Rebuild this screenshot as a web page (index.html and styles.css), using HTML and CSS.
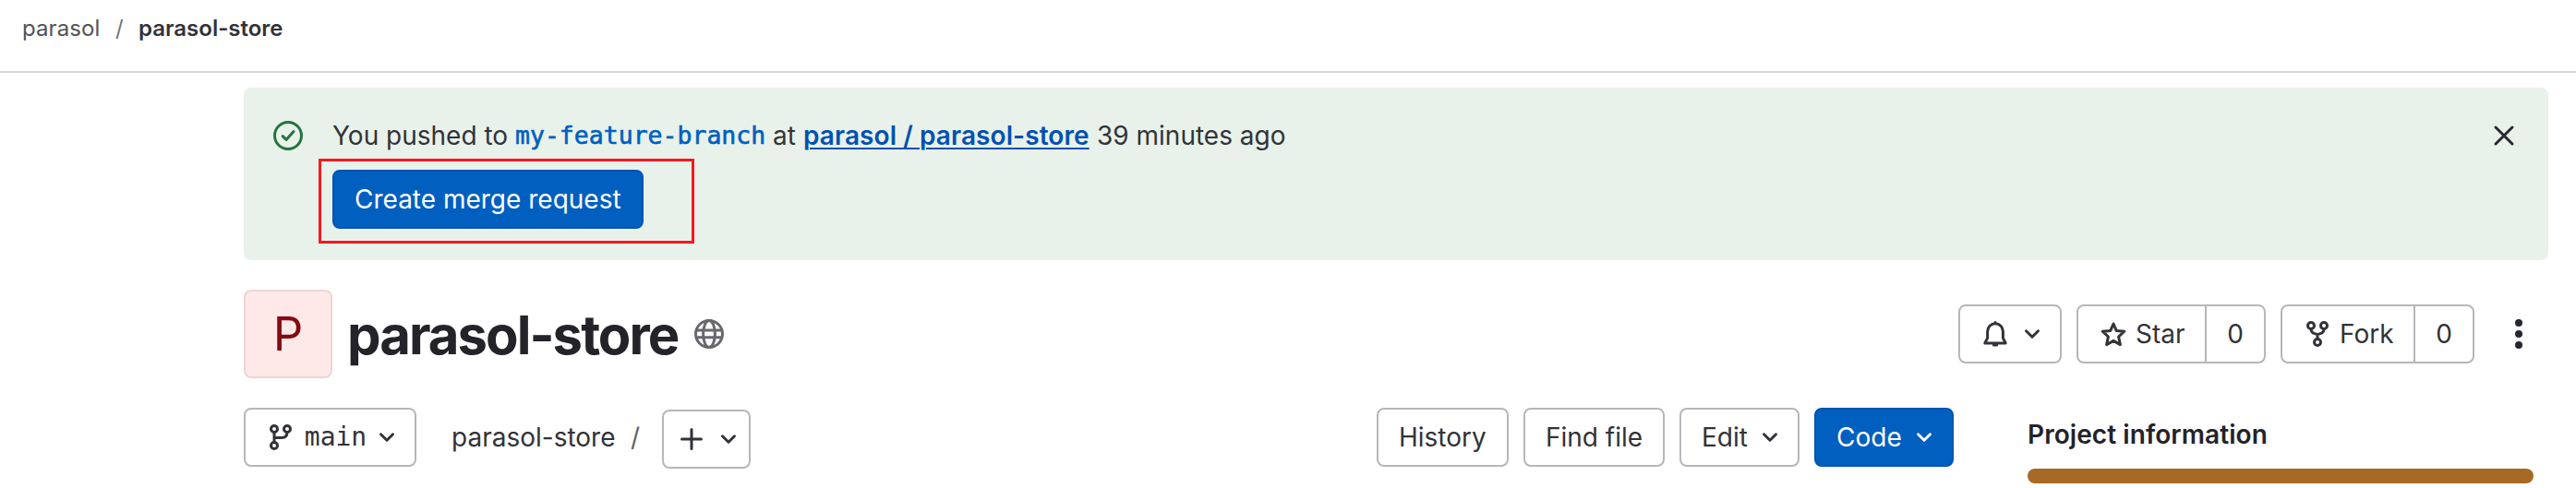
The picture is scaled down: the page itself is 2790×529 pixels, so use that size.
FILE: index.html
```html
<!DOCTYPE html>
<html lang="en">
<head>
<meta charset="utf-8">
<title>parasol-store</title>
<link rel="stylesheet" href="styles.css">
</head>
<body>
<svg class="defs" aria-hidden="true">
  <symbol id="chevron" viewBox="0 0 16 16"><path d="M4.75 6.4 8 9.6l3.250-3.200"/></symbol>
</svg>
<header class="topbar">
  <span class="crumb">parasol</span><span class="crumb-sep">/</span><b class="crumb-current">parasol-store</b>
</header>
<main class="page">
  <section class="alert">
    <svg class="icon alert-icon" viewBox="0 0 16 16"><circle cx="8" cy="8" r="7.25"/><path d="M5.1 8.3 7 10.2l4-4.4"/></svg>
    <div class="alert-body">
      <p class="alert-text"><span class="pushed">You pushed to</span><a class="branch">my-feature-branch</a><span class="at">at</span><a class="project-link">parasol / parasol-store</a><span class="ago">39 minutes ago</span></p>
      <div class="highlight"><button class="btn primary create"><span>Create merge request</span></button></div>
    </div>
    <svg class="icon close" viewBox="0 0 16 16"><path d="m3.5 3.5 9 9m0-9-9 9"/></svg>
  </section>
  <section class="title-row">
    <div class="avatar">P</div>
    <h1>parasol-store</h1>
    <svg class="icon globe" viewBox="0 0 16 16"><circle cx="8" cy="8" r="7.25"/><ellipse cx="8" cy="8" rx="3.2" ry="7.25"/><path d="M1.3 6h13.4M1.3 9.9h13.4"/></svg>
    <div class="actions">
      <button class="btn bell"><svg class="icon" viewBox="0 0 16 16"><path d="M8 1.7v.5M3.8 6.600a4.200 4.200 0 0 1 8.400 0v3.600l1.400 2.800H2.400l1.400-2.800zM7.200 14h1.600"/></svg><svg class="icon"><use href="#chevron"/></svg></button>
      <div class="group star"><button class="btn"><svg class="icon" viewBox="0 0 16 16"><path d="m8 2.500 1.600 3.700 4.300.400-3.100 2.900.900 4.300L8 11.700l-3.700 2.100.900-4.300-3.100-2.900 4.300-.400z"/></svg><span>Star</span></button><button class="btn count">0</button></div>
      <div class="group fork"><button class="btn"><svg class="icon" viewBox="0 0 16 16"><circle cx="4.5" cy="3.5" r="1.75"/><circle cx="11.5" cy="3.5" r="1.75"/><circle cx="8" cy="12.5" r="1.75"/><path d="M4.500 5.250C4.500 7 5.200 7.500 6.500 7.800L8 8.300l1.500-.500c1.300-.300 2-.800 2-2.550M8 8.300v2.450"/></svg><span>Fork</span></button><button class="btn count">0</button></div>
      <svg class="dots" viewBox="0 0 16 16"><circle cx="8" cy="2" r="2"/><circle cx="8" cy="8" r="2"/><circle cx="8" cy="14" r="2"/></svg>
    </div>
  </section>
  <section class="tree-row">
    <button class="btn ref"><svg class="icon" viewBox="0 0 16 16"><circle cx="4.5" cy="3.5" r="1.75"/><circle cx="11.5" cy="3.5" r="1.75"/><circle cx="4.5" cy="12.5" r="1.75"/><path d="M4.500 5.250v5.500M4.500 8.250H8.500c2 0 3-1 3-3"/></svg><span>main</span><svg class="icon"><use href="#chevron"/></svg></button>
    <span class="path">parasol-store</span><span class="path-sep">/</span>
    <button class="btn add"><svg class="icon" viewBox="0 0 16 16"><path d="M8 2.750v10.500M2.750 8h10.500"/></svg><svg class="icon"><use href="#chevron"/></svg></button>
    <div class="tools">
      <button class="btn history"><span>History</span></button>
      <button class="btn find"><span>Find file</span></button>
      <button class="btn edit"><span>Edit</span><svg class="icon"><use href="#chevron"/></svg></button>
      <button class="btn primary code"><span>Code</span><svg class="icon"><use href="#chevron"/></svg></button>
    </div>
    <aside class="info"><h2>Project information</h2><div class="language-bar"></div></aside>
  </section>
</main>
</body>
</html>
```
FILE: styles.css
```css
* { box-sizing: border-box; }
body { margin: 0; width: 2790px; height: 529px; overflow: hidden; background: #fff; color: #333238; font: 28px/40px Inter, sans-serif; }
.defs { position: absolute; width: 0; height: 0; }
h1, h2, p { margin: 0; }
span, b, a, h1, h2 { white-space: nowrap; }
.icon { width: 32px; height: 32px; flex: none; fill: none; stroke: currentColor; stroke-width: 1.5; stroke-linecap: round; stroke-linejoin: round; }

.topbar { height: 79px; padding: 11px 24px; display: flex; border-bottom: 2px solid #d6d6d8; font-size: 24px; }
.crumb { width: 101px; color: #535158; letter-spacing: .1px; }
.crumb-sep { width: 25px; color: #737278; }
.crumb-current { font-weight: 600; }

.page { padding: 16px 30px 0 264px; }
.alert { height: 187px; padding: 32px; display: flex; background: #e8f2ea; border-radius: 8px; }
.alert-icon { margin-top: 4px; color: #24743e; }
.alert-body { margin-left: 32px; }
.alert-text { display: flex; height: 40px; }
.pushed { width: 198px; }
.branch { width: 279px; color: #005fbf; font: 26.5px/40px "DejaVu Sans Mono", monospace; -webkit-text-stroke: .6px currentColor; }
.at { width: 33px; }
.project-link { width: 318px; color: #0050b3; font-weight: 600; letter-spacing: .08px; text-decoration: underline; text-decoration-thickness: 2px; text-underline-offset: 3px; }
.highlight { margin: 5px 0 0 -15px; width: 407px; height: 92px; border: 3px solid #fb1620; padding: 9px 12px; }
.close { margin: 4px 0 0 auto; color: #28272d; }

.btn { display: flex; align-items: center; height: 64px; margin: 0; padding: 0 22px; color: #333238; background: #fff; border: 2px solid #b7b6bc; border-radius: 8px; font: inherit; }
.btn.primary { color: #fff; background: #005fbf; border-color: #0054b3; }
.create { width: 337px; }

.title-row { display: flex; margin-top: 32px; height: 96px; }
.avatar { width: 96px; height: 96px; display: grid; place-items: center; background: #ffe9e8; border: 2px solid #edd6d6; border-radius: 8px; color: #840b12; font-size: 51px; }
h1 { margin-left: 16px; width: 376px; font-size: 58px; line-height: 98px; font-weight: 650; letter-spacing: -1.95px; color: #24232a; }
.globe { margin-top: 32px; color: #68676e; }
.actions { display: flex; margin: 16px 16px 0 auto; height: 64px; }
.bell { width: 112px; gap: 8px; }
.group { display: flex; margin-left: 16px; }
.group .btn:first-child { border-radius: 8px 0 0 8px; gap: 8px; }
.star .btn:first-child { width: 141px; }
.fork .btn:first-child { width: 146px; }
.group .count { width: 66px; margin-left: -2px; padding: 0; justify-content: center; border-radius: 0 8px 8px 0; }
.dots { width: 32px; height: 32px; margin: 16px 0 0 32px; fill: #28272d; }

.tree-row { display: flex; align-items: flex-start; margin-top: 32px; }
.ref { width: 187px; padding: 0 22px; }
.ref span { flex: none; width: 79px; margin: 0 0 0 4px; font: 28px/40px "DejaVu Sans Mono", monospace; }
.ref .icon:last-child { margin-right: -8px; }
.path { margin: 12px 0 0 38px; width: 194px; }
.path-sep { margin-top: 12px; width: 34px; color: #626168; }
.add { width: 96px; margin-top: 2px; padding: 0 14px; gap: 8px; }
.tools { display: flex; gap: 16px; margin-left: 678px; }
.history { width: 143px; }
.find { width: 153px; }
.edit { width: 130px; }
.code { width: 151px; }
.edit .icon, .code .icon { margin-left: 8px; }
.info { margin-left: 80px; width: 548px; padding-top: 9px; }
h2 { font-size: 28px; line-height: 40px; font-weight: 600; letter-spacing: .07px; color: #24232a; }
.language-bar { margin-top: 17px; height: 16px; border-radius: 8px; background: #a66a25; }
```
